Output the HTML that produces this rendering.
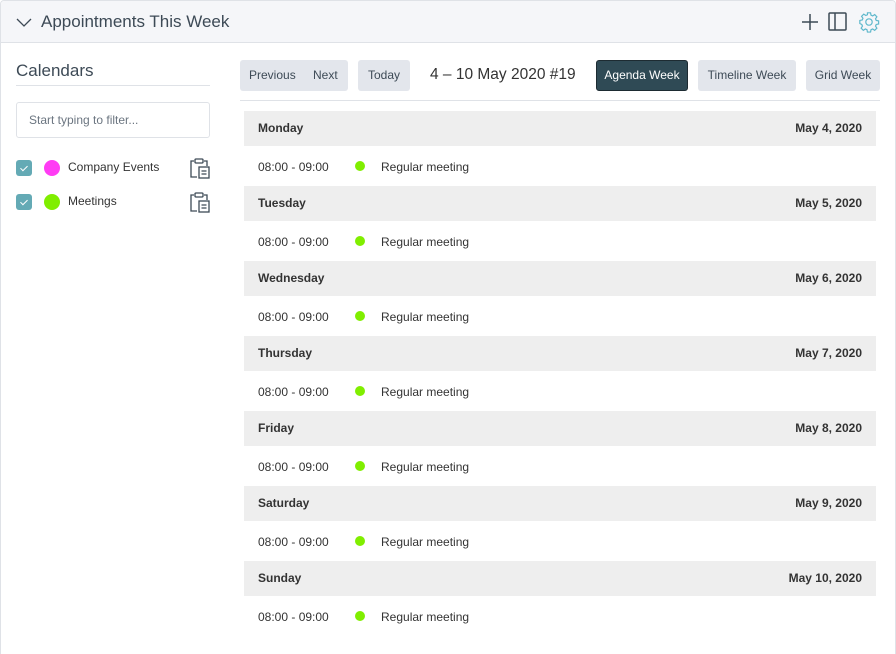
<!DOCTYPE html>
<html style="width:896px;height:654px;overflow:hidden"><head><style>
*{box-sizing:border-box;margin:0;padding:0}
body{width:896px;height:654px;background:#fff;font-family:"Liberation Sans",sans-serif;color:#333;position:relative;overflow:hidden}
.frame{position:absolute;left:0;top:0;width:896px;height:660px;border:1px solid #dfe2e7;border-radius:4px}
.hdr{position:absolute;left:1px;top:1px;width:894px;height:42px;background:#f5f6f9;border-bottom:1px solid #dfe2e7;border-radius:4px 4px 0 0}
.abs{position:absolute}
.btn{position:absolute;top:60px;height:31px;background:#e3e6ec;border-radius:3px;font-size:12px;color:#3d4a56;line-height:31px;text-align:center}
.dh{position:absolute;left:244px;width:632px;height:35px;background:#eee;font-size:12px;font-weight:bold;color:#333;line-height:35px;padding:0 14px}
.dh span{float:right}
.it{position:absolute;left:258px;font-size:12px;color:#333;line-height:16px}
.dot{position:absolute;left:355px;width:10px;height:10px;border-radius:50%;background:#80ee00}
.cb{position:absolute;left:16px;width:16px;height:16px;background:#64aab5;border-radius:3px}
.cb:after{content:"";position:absolute;left:5.5px;top:3.5px;width:3px;height:6px;border:solid #fff;border-width:0 1.8px 1.8px 0;transform:rotate(45deg)}
</style></head><body>
<div class="frame"></div>
<div class="hdr"></div>
<svg class="abs" style="left:16px;top:16px" width="16" height="12"><path d="M1 3 L8 10 L15 3" fill="none" stroke="#3d4a56" stroke-width="1.3"/></svg>
<div class="abs" style="left:41px;top:12px;font-size:17px;color:#3d4a56">Appointments This Week</div>
<svg class="abs" style="left:800px;top:12px" width="20" height="20"><path d="M10 2V18M2 10H18" stroke="#3d4a56" stroke-width="1.5"/></svg>
<svg class="abs" style="left:828px;top:12px" width="20" height="20"><rect x="1" y="1" width="17" height="17" rx="1" fill="none" stroke="#3d4a56" stroke-width="1.5"/><path d="M7 1V18" stroke="#3d4a56" stroke-width="1.5"/></svg>
<svg class="abs" style="left:858px;top:11px" width="22" height="22" viewBox="0 0 24 24"><path d="M10.3 2h3.4l.5 2.6 1.8.8 2.2-1.5 2.4 2.4-1.5 2.2.8 1.8 2.6.5v3.4l-2.6.5-.8 1.8 1.5 2.2-2.4 2.4-2.2-1.5-1.8.8-.5 2.6h-3.4l-.5-2.6-1.8-.8-2.2 1.5-2.4-2.4 1.5-2.2-.8-1.8L2 13.7v-3.4l2.6-.5.8-1.8-1.5-2.2 2.4-2.4 2.2 1.5 1.8-.8z" fill="none" stroke="#5fb8cc" stroke-width="1.3"/><circle cx="12" cy="12" r="3.5" fill="none" stroke="#5fb8cc" stroke-width="1.3"/></svg>

<div class="abs" style="left:16px;top:61px;font-size:17px;color:#3d4a56">Calendars</div>
<div class="abs" style="left:16px;top:85px;width:194px;height:1px;background:#dfe2e7"></div>
<div class="abs" style="left:16px;top:102px;width:194px;height:36px;border:1px solid #dfe2e7;border-radius:3px;font-size:12px;color:#6b7580;line-height:34px;padding-left:12px">Start typing to filter...</div>
<div class="cb" style="top:160px"></div>
<div class="abs" style="left:44px;top:160px;width:16px;height:16px;border-radius:50%;background:#ff3cf4"></div>
<div class="abs" style="left:68px;top:160px;font-size:12px;color:#333">Company Events</div>
<div class="cb" style="top:194px"></div>
<div class="abs" style="left:44px;top:194px;width:16px;height:16px;border-radius:50%;background:#80ee00"></div>
<div class="abs" style="left:68px;top:194px;font-size:12px;color:#333">Meetings</div>
<svg class="abs" style="left:189px;top:157px" width="22" height="22"><path d="M5 4H2V20H8M15 4H18V9" fill="none" stroke="#3d4a56" stroke-width="1.3"/><rect x="6" y="2" width="8" height="4" rx="1" fill="none" stroke="#3d4a56" stroke-width="1.3"/><rect x="10" y="10" width="10" height="11" fill="none" stroke="#3d4a56" stroke-width="1.3"/><path d="M12.5 14H17.5M12.5 17H17.5" stroke="#3d4a56" stroke-width="1.2"/></svg>
<svg class="abs" style="left:189px;top:191px" width="22" height="22"><path d="M5 4H2V20H8M15 4H18V9" fill="none" stroke="#3d4a56" stroke-width="1.3"/><rect x="6" y="2" width="8" height="4" rx="1" fill="none" stroke="#3d4a56" stroke-width="1.3"/><rect x="10" y="10" width="10" height="11" fill="none" stroke="#3d4a56" stroke-width="1.3"/><path d="M12.5 14H17.5M12.5 17H17.5" stroke="#3d4a56" stroke-width="1.2"/></svg>

<div class="btn" style="left:240px;width:108px;text-align:left;padding-left:9px">Previous<span style="position:absolute;left:73px">Next</span></div>
<div class="btn" style="left:358px;width:52px">Today</div>
<div class="abs" style="left:430px;top:66px;font-size:15.5px;color:#333">4 – 10 May 2020 #19</div>
<div class="btn" style="left:596px;width:92px;background:#2f4a55;border:1px solid #1d2b32;color:#fff;line-height:29px">Agenda Week</div>
<div class="btn" style="left:698px;width:98px">Timeline Week</div>
<div class="btn" style="left:806px;width:74px">Grid Week</div>
<div class="abs" style="left:240px;top:100px;width:640px;height:1px;background:#dfe2e7"></div>

<div class="dh" style="top:111px">Monday<span>May 4, 2020</span></div>
<div class="it" style="top:159px">08:00 - 09:00</div><div class="dot" style="top:161px"></div><div class="it" style="left:381px;top:159px">Regular meeting</div>
<div class="dh" style="top:186px">Tuesday<span>May 5, 2020</span></div>
<div class="it" style="top:234px">08:00 - 09:00</div><div class="dot" style="top:236px"></div><div class="it" style="left:381px;top:234px">Regular meeting</div>
<div class="dh" style="top:261px">Wednesday<span>May 6, 2020</span></div>
<div class="it" style="top:309px">08:00 - 09:00</div><div class="dot" style="top:311px"></div><div class="it" style="left:381px;top:309px">Regular meeting</div>
<div class="dh" style="top:336px">Thursday<span>May 7, 2020</span></div>
<div class="it" style="top:384px">08:00 - 09:00</div><div class="dot" style="top:386px"></div><div class="it" style="left:381px;top:384px">Regular meeting</div>
<div class="dh" style="top:411px">Friday<span>May 8, 2020</span></div>
<div class="it" style="top:459px">08:00 - 09:00</div><div class="dot" style="top:461px"></div><div class="it" style="left:381px;top:459px">Regular meeting</div>
<div class="dh" style="top:486px">Saturday<span>May 9, 2020</span></div>
<div class="it" style="top:534px">08:00 - 09:00</div><div class="dot" style="top:536px"></div><div class="it" style="left:381px;top:534px">Regular meeting</div>
<div class="dh" style="top:561px">Sunday<span>May 10, 2020</span></div>
<div class="it" style="top:609px">08:00 - 09:00</div><div class="dot" style="top:611px"></div><div class="it" style="left:381px;top:609px">Regular meeting</div>
</body></html>
